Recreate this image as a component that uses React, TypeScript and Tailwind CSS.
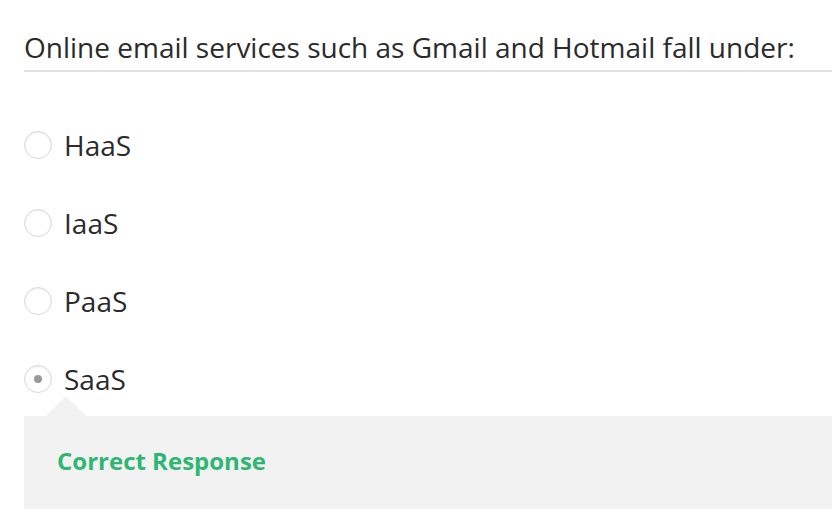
const options = ["HaaS", "IaaS", "PaaS", "SaaS"];
const selected = "SaaS";

function Radio({ checked }: { checked: boolean }) {
  return (
    <span className="flex h-[28px] w-[28px] shrink-0 items-center justify-center rounded-full border border-[#d9d9d9] bg-white shadow-[inset_0_1px_2px_rgba(0,0,0,0.08)]">
      {checked ? <span className="h-[8px] w-[8px] rounded-full bg-[#9a9a9a]" /> : null}
    </span>
  );
}

export default function App() {
  return (
    <div className="min-h-screen bg-white pl-[24px] pt-[29px] font-['Open_Sans',sans-serif] text-[#2b2b2b]">
      <h1 className="border-b-2 border-[#e3e3e3] pb-[5px] text-[28px] font-normal leading-[36px]">
        Online email services such as Gmail and Hotmail fall under:
      </h1>
      <div className="flex flex-col gap-[40px] pt-[54px]">
        {options.map((opt) => (
          <label key={opt} className="flex h-[38px] items-center gap-[12px]">
            <Radio checked={opt === selected} />
            <span className="text-[28px] leading-[38px]">{opt}</span>
          </label>
        ))}
      </div>
      <div className="relative mt-[18px] h-[93px] bg-[#f2f2f2] pl-[33px] pt-[27px]">
        <span className="absolute left-[22px] top-[-20px] h-0 w-0 border-x-[20px] border-b-[20px] border-x-transparent border-b-[#f2f2f2]" />
        <div className="text-[24px] font-bold leading-[36px] text-[#2fb673]">Correct Response</div>
      </div>
    </div>
  );
}
